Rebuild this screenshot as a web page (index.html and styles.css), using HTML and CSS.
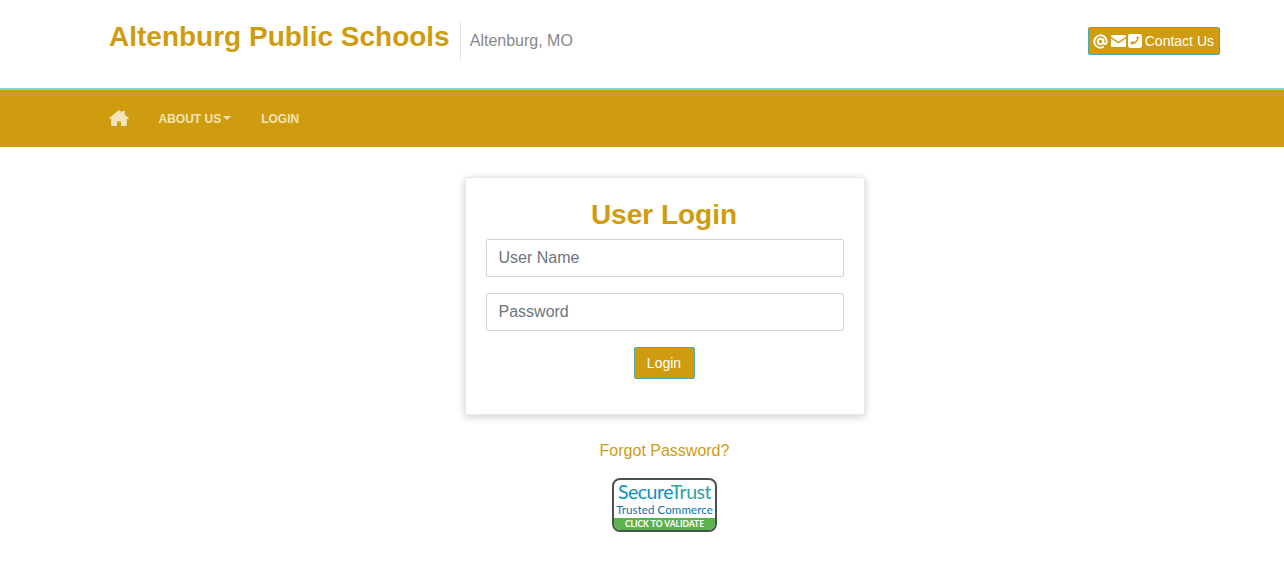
FILE: index.html
```html
<!DOCTYPE html>
<html lang="en">
<head>
<meta charset="utf-8">
<title>User Login</title>
<link rel="stylesheet" href="styles.css">
</head>
<body>
<header class="top">
  <div class="wrap top-row">
    <div class="brand">
      <a class="brand-name">Altenburg Public Schools</a>
      <span class="brand-place">Altenburg, MO</span>
    </div>
    <a class="contact">
      <svg viewBox="0 0 16 16" width="15" height="15"><circle cx="8" cy="8" r="2.9" fill="none" stroke="#fff" stroke-width="2"/><path d="M11 5v4.200c0 2.200 3.600 2.200 3.600-1.200A6.600 6.600 0 1 0 11.500 13.600" fill="none" stroke="#fff" stroke-width="2"/></svg>
      <svg viewBox="0 0 15 12" width="15" height="12"><path d="M1.300 0h12.400c.7 0 1.300.6 1.300 1.300v.5L7.500 6.800 0 1.800v-.5C0 .6.600 0 1.300 0z" fill="#fff"/><path d="M0 3.400l7.500 5 7.500-5v7.300c0 .7-.6 1.300-1.300 1.300H1.300C.6 12 0 11.400 0 10.700z" fill="#fff"/></svg>
      <svg class="ic-phone" viewBox="0 0 13 13" width="14" height="14"><path fill-rule="evenodd" d="M2 0h9a2 2 0 0 1 2 2v9a2 2 0 0 1-2 2H2a2 2 0 0 1-2-2V2a2 2 0 0 1 2-2zm7.300 2.300L7.600 3l.8 2-1 .8c-.3.9-.9 1.500-1.800 1.800l-.8-1-2 .8-.5 1.700c.2.500.5.700 1 .7 3.800-.2 6.400-2.900 6.700-6.700 0-.4-.2-.7-.7-.8z" fill="#fff"/></svg>
      <span>Contact Us</span>
    </a>
  </div>
</header>
<nav class="bar">
  <div class="wrap bar-row">
    <a class="home"><svg viewBox="0 0 20 16" width="20" height="16"><path d="M10 0l3 2.400V1h2.800v3.700L20 8.200l-1 1.300-1.200-1V15a1 1 0 0 1-1 1H12v-4.500H8V16H3.200a1 1 0 0 1-1-1V8.500L1 9.500 0 8.200z" fill="#f2e3b8"/></svg></a>
    <a class="nav-link about">ABOUT US<span class="caret"></span></a>
    <a class="nav-link">LOGIN</a>
  </div>
</nav>
<main class="main">
  <form class="card">
    <h1 class="card-title">User Login</h1>
    <input class="field" type="text" placeholder="User Name">
    <input class="field" type="password" placeholder="Password">
    <div class="actions"><button class="btn" type="button">Login</button></div>
  </form>
  <a class="forgot">Forgot Password?</a>
  <a class="seal">
    <span class="seal-name"><span>Secure</span><span class="seal-thin">Trust</span></span>
    <span class="seal-sub">Trusted Commerce</span>
    <span class="seal-cta">CLICK TO VALIDATE</span>
  </a>
</main>
</body>
</html>
```
FILE: styles.css
```css
* { box-sizing: border-box; }
html, body { margin: 0; padding: 0; }
body {
  background: #fff;
  font-family: "Liberation Sans", Arial, sans-serif;
  font-size: 16px;
  color: #212529;
  height: 575px;
  overflow: hidden;
}
.wrap { width: 1141px; margin-left: 94px; padding: 0 15px; }
.top { height: 88px; }
.top-row { display: flex; justify-content: space-between; align-items: flex-start; height: 100%; }
.brand { display: flex; align-items: flex-start; padding-top: 21px; }
.brand-name {
  font-size: 28px;
  font-weight: 700;
  line-height: 32px;
  color: #cf9c0f;
  padding-right: 10px;
}
.brand-place {
  font-size: 16px;
  line-height: 40px;
  height: 40px;
  color: #888;
  border-left: 1px solid #e6e6e6;
  padding-left: 9px;
}
.contact {
  display: flex;
  align-items: center;
  gap: 3px;
  margin-top: 27px;
  height: 28px;
  padding: 0 5px 0 4px;
  background: #cf9c0f;
  border: 1px solid #4fa9a6;
  border-radius: 2px;
  color: #fff;
  font-size: 14px;
}
.ic-phone { margin-left: -1px; }
.bar {
  height: 59px;
  background: #cf9c0f;
  border-top: 2px solid #8fcfc9;
}
.bar-row { display: flex; align-items: center; height: 57px; }
.home { display: flex; margin-right: 29.500px; margin-top: -2px; }
.nav-link {
  font-size: 12px;
  font-weight: 700;
  color: #f2e3b8;
  margin-right: 30px;
  display: flex;
  align-items: center;
}
.caret {
  display: inline-block;
  width: 0;
  height: 0;
  margin-left: 2px;
  margin-top: -2px;
  border-left: 4px solid transparent;
  border-right: 4px solid transparent;
  border-top: 4px solid #f2e3b8;
}
.main { display: flex; flex-direction: column; align-items: center; padding: 30px 0 0 45px; }
.card {
  width: 400px;
  height: 238px;
  padding: 20px 20px 0;
  border: 1px solid #e8e8e8;
  border-radius: 2px;
  box-shadow: 0 2px 8px rgba(0, 0, 0, .2);
  background: #fff;
  display: flex;
  flex-direction: column;
}
.card-title {
  margin: 0 0 7px;
  font-size: 28px;
  line-height: 34px;
  font-weight: 700;
  color: #cf9c0f;
  text-align: center;
  padding-right: 1px;
}
.field {
  display: block;
  width: 100%;
  height: 38px;
  margin-bottom: 16px;
  padding: 6px 12px;
  border: 1px solid #ced4da;
  border-radius: 2px;
  font: 16px "Liberation Sans", Arial, sans-serif;
  background: #fff;
}
.field::placeholder { color: #6c757d; opacity: 1; }
.actions { display: flex; justify-content: center; padding-right: 1px; }
.btn {
  width: 61px;
  height: 32px;
  padding: 0;
  background: #cf9c0f;
  border: 1px solid #4fa9a6;
  border-radius: 2px;
  color: #fff;
  font: 14px "Liberation Sans", Arial, sans-serif;
}
.forgot { margin-top: 26px; font-size: 16px; line-height: 20px; color: #cf9c0f; }
.seal {
  margin-top: 17px;
  width: 105px;
  height: 54px;
  border: 2px solid #4a5250;
  border-radius: 8px;
  background: #fff;
  display: flex;
  flex-direction: column;
  align-items: center;
  overflow: hidden;
  font-family: Lato, sans-serif;
}
.seal-name { font-size: 19.500px; line-height: 24px; color: #0a90c4; letter-spacing: -.5px; white-space: nowrap; }
.seal-thin { color: #2f9fa3; font-weight: 400; }
.seal-sub { font-size: 11.500px; line-height: 13px; color: #0b6fa8; font-weight: 400; letter-spacing: .1px; white-space: nowrap; margin-top: -1px; }
.seal-cta {
  margin-top: auto;
  width: 100%;
  height: 12px;
  background: #5cb24e;
  color: #fff;
  font-size: 8.500px;
  line-height: 12px;
  font-weight: 700;
  text-align: center;
  white-space: nowrap;
}
```
